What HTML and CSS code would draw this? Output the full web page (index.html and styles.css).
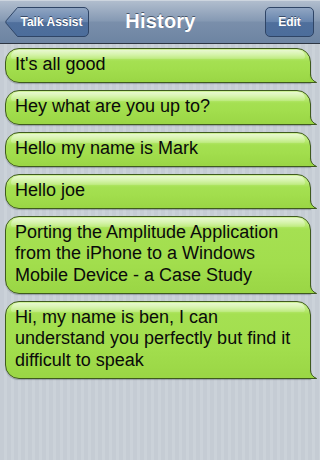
FILE: index.html
```html
<!DOCTYPE html>
<html>
<head>
<meta charset="utf-8">
<link rel="stylesheet" href="styles.css">
</head>
<body>
<div class="screen">
  <header class="navbar">
    <div class="nav-left">
      <button class="back-btn">
        <svg class="back-shape" width="84" height="30" viewBox="0 0 84 30">
          <defs>
            <linearGradient id="bg" x1="0" y1="0" x2="0" y2="1">
              <stop offset="0" stop-color="#91a6c3"/>
              <stop offset="0.5" stop-color="#6684ad"/>
              <stop offset="0.52" stop-color="#4f6f9c"/>
              <stop offset="1" stop-color="#4c6d9b"/>
            </linearGradient>
          </defs>
          <path d="M12.5,0.5 H79 a4.5,4.5 0 0 1 4.5,4.5 V25 a4.5,4.5 0 0 1 -4.5,4.5 H12.5 L1.2,16.3 Q0.3,15 1.2,13.7 Z" fill="url(#bg)" stroke="#2f4566" stroke-width="1"/>
        </svg>
        <span class="back-label">Talk Assist</span>
      </button>
    </div>
    <h1 class="title">History</h1>
    <div class="nav-right">
      <button class="edit-btn">Edit</button>
    </div>
  </header>

  <main class="list">
    <div class="bubble"><span>It's all good</span><svg class="tail" width="8" height="9" viewBox="0 0 8 9"><path d="M0,0 H1.5 Q1.6,6 7.6,8.5 L0,8.5 Z" fill="#9ad645"/><path d="M1.5,0 Q1.6,6 7.6,8.5 H0" fill="none" stroke="#3f5a1e" stroke-width="1"/></svg></div>
    <div class="bubble"><span>Hey what are you up to?</span><svg class="tail" width="8" height="9" viewBox="0 0 8 9"><path d="M0,0 H1.5 Q1.6,6 7.6,8.5 L0,8.5 Z" fill="#9ad645"/><path d="M1.5,0 Q1.6,6 7.6,8.5 H0" fill="none" stroke="#3f5a1e" stroke-width="1"/></svg></div>
    <div class="bubble"><span>Hello my name is Mark</span><svg class="tail" width="8" height="9" viewBox="0 0 8 9"><path d="M0,0 H1.5 Q1.6,6 7.6,8.5 L0,8.5 Z" fill="#9ad645"/><path d="M1.5,0 Q1.6,6 7.6,8.5 H0" fill="none" stroke="#3f5a1e" stroke-width="1"/></svg></div>
    <div class="bubble"><span>Hello joe</span><svg class="tail" width="8" height="9" viewBox="0 0 8 9"><path d="M0,0 H1.5 Q1.6,6 7.6,8.5 L0,8.5 Z" fill="#9ad645"/><path d="M1.5,0 Q1.6,6 7.6,8.5 H0" fill="none" stroke="#3f5a1e" stroke-width="1"/></svg></div>
    <div class="bubble"><span>Porting the Amplitude Application from the iPhone to a Windows Mobile Device - a Case Study</span><svg class="tail" width="8" height="9" viewBox="0 0 8 9"><path d="M0,0 H1.5 Q1.6,6 7.6,8.5 L0,8.5 Z" fill="#9ad645"/><path d="M1.5,0 Q1.6,6 7.6,8.5 H0" fill="none" stroke="#3f5a1e" stroke-width="1"/></svg></div>
    <div class="bubble"><span>Hi, my name is ben, I can understand you perfectly but find it difficult to speak</span><svg class="tail" width="8" height="9" viewBox="0 0 8 9"><path d="M0,0 H1.5 Q1.6,6 7.6,8.5 L0,8.5 Z" fill="#9ad645"/><path d="M1.5,0 Q1.6,6 7.6,8.5 H0" fill="none" stroke="#3f5a1e" stroke-width="1"/></svg></div>
  </main>
</div>
</body>
</html>
```
FILE: styles.css
```css
* { box-sizing: border-box; }
html, body {
  margin: 0;
  padding: 0;
}
body {
  width: 320px;
  height: 460px;
  overflow: hidden;
  font-family: "Liberation Sans", Arial, Helvetica, sans-serif;
  background: repeating-linear-gradient(90deg, #c5ccd4 0px, #c5ccd4 4px, #cbd2d9 4px, #cbd2d9 7px);
}
.screen {
  width: 320px;
  height: 460px;
  display: flex;
  flex-direction: column;
}
.navbar {
  height: 44px;
  flex: 0 0 44px;
  display: grid;
  grid-template-columns: 1fr auto 1fr;
  align-items: center;
  background: linear-gradient(to bottom, #b3bfcf 0px, #9dadc2 10px, #8599b3 21px, #7a8fab 22px, #6d84a2 43px);
  border-bottom: 1px solid #2d3642;
  box-shadow: inset 0 1px 0 #cdd5df;
}
.nav-left { display: flex; justify-content: flex-start; padding-left: 5px; }
.nav-right { display: flex; justify-content: flex-end; padding-right: 6px; }
.title {
  margin: 0;
  font-size: 20px;
  font-weight: bold;
  color: #fff;
  text-shadow: 0 -1px 0 rgba(40, 52, 70, 0.7);
  letter-spacing: 0.2px;
  padding-left: 1px;
}
button {
  font-family: inherit;
  margin: 0;
  padding: 0;
  cursor: pointer;
}
.back-btn {
  position: relative;
  width: 84px;
  height: 30px;
  border: none;
  background: none;
  display: flex;
  align-items: center;
  justify-content: center;
}
.back-shape {
  position: absolute;
  left: 0;
  top: 0;
}
.back-label {
  position: relative;
  padding-left: 9px;
  font-size: 12px;
  font-weight: bold;
  color: #fff;
  text-shadow: 0 -1px 0 rgba(30, 45, 70, 0.7);
}
.edit-btn {
  width: 49px;
  height: 30px;
  border: 1px solid #2f4566;
  border-radius: 5px;
  background: linear-gradient(to bottom, #91a6c3 0%, #6684ad 50%, #4f6f9c 52%, #4c6d9b 100%);
  font-size: 12px;
  font-weight: bold;
  color: #fff;
  text-shadow: 0 -1px 0 rgba(30, 45, 70, 0.7);
}
.list {
  display: flex;
  flex-direction: column;
  gap: 7px;
  padding: 4px 9px 0 5px;
}
.bubble {
  position: relative;
  border: 1px solid #3f5a1e;
  border-radius: 14px 14px 0 14px;
  padding: 4.5px 12px 7px 9px;
  font-size: 18px;
  line-height: 21.5px;
  color: #0a0a0a;
  background: linear-gradient(to bottom, #cff29a 0px, #c2ee83 5px, #b4e86b 9px, #a5e052 12px, #a2de4d 60%, #9ad645 100%);
  box-shadow: 0 1px 1px rgba(60, 70, 80, 0.35);
}
.bubble::before {
  content: "";
  position: absolute;
  left: 5px;
  right: 5px;
  top: 1px;
  height: 9px;
  border-radius: 10px 10px 4px 4px;
  background: linear-gradient(to bottom, rgba(255,255,255,0.55), rgba(255,255,255,0.15));
}
.bubble span {
  position: relative;
}
.tail {
  position: absolute;
  right: -7px;
  bottom: -1px;
  display: block;
}
```
